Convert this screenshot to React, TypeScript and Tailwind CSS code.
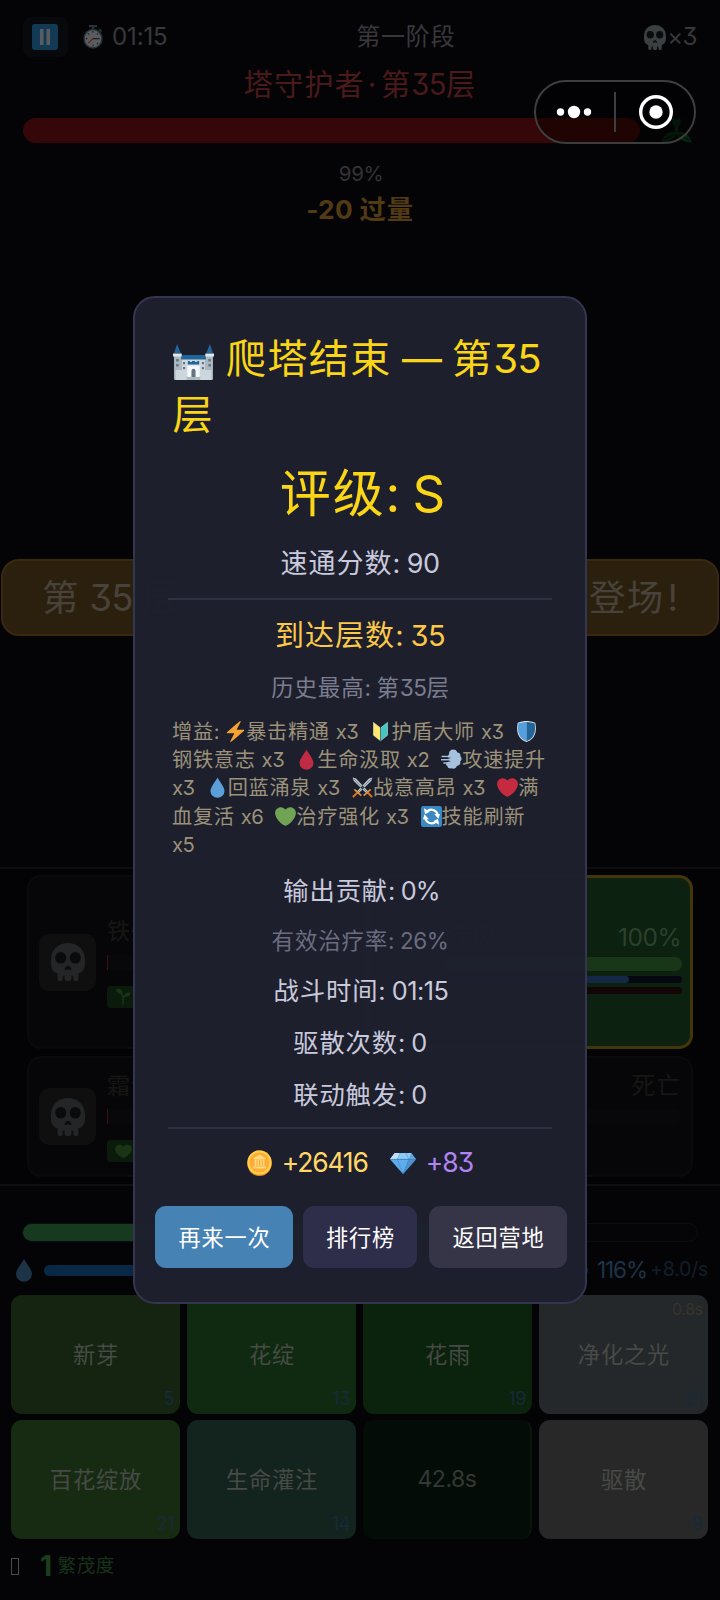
import React from "react";

const HAN = /([\u3400-\u9fff]+)/;

/** Mixed Han and Latin text: each script gets its own spacing. */
function T({ children, latin = "tracking-[-0.02em]" }: { children: string; latin?: string }) {
  return (
    <>
      {children.split(HAN).map((part, i) =>
        part === "" ? null : HAN.test(part) ? (
          <span key={i} className="tracking-[0.035em]">{part}</span>
        ) : (
          <span key={i} className={`whitespace-pre [font-feature-settings:'cv09'] ${latin}`}>{part}</span>
        ),
      )}
    </>
  );
}

type IconProps = { className?: string };

function Svg({ className = "", children, box = "0 0 36 36" }: { className?: string; children: React.ReactNode; box?: string }) {
  return (
    <svg viewBox={box} className={`inline-block shrink-0 ${className}`} preserveAspectRatio="none" aria-hidden>
      {children}
    </svg>
  );
}

const HEART =
  "M35.885 11.833c0-5.45-4.418-9.868-9.867-9.868-3.308 0-6.227 1.633-8.018 4.129-1.791-2.496-4.71-4.129-8.017-4.129-5.45 0-9.868 4.417-9.868 9.868 0 .772.098 1.52.266 2.241C1.751 22.587 11.216 31.568 18 34.034c6.783-2.466 16.249-11.447 17.617-19.959.17-.721.268-1.469.268-2.242z";
const ZAP =
  "M32.938 15.651C32.792 15.26 32.418 15 32 15H19.925L26.89 1.458c.219-.426.106-.947-.271-1.243C26.437.071 26.218 0 26 0c-.233 0-.466.082-.653.243L18 6.588 3.347 19.243c-.316.273-.43.714-.284 1.105S3.582 21 4 21h12.075L9.11 34.542c-.219.426-.106.947.271 1.243.182.144.401.215.619.215.233 0 .466-.082.653-.243L18 29.412l14.653-12.655c.317-.273.43-.714.285-1.106z";

const Heart = ({ className, fill }: IconProps & { fill: string }) => (
  <Svg className={className}><path fill={fill} d={HEART} /></Svg>
);
const Zap = ({ className }: IconProps) => (
  <Svg className={className}><path fill="#f4a332" d={ZAP} /></Svg>
);
const Drop = ({ className, fill }: IconProps & { fill: string }) => (
  <Svg className={className}>
    <path fill={fill} d="M18 1C15 7.500 6 17 6 24a12 11.500 0 0 0 24 0C30 17 21 7.500 18 1z" />
  </Svg>
);
const Beginner = ({ className }: IconProps) => (
  <Svg className={className}>
    <path fill="#ffe872" stroke="#f3efb0" d="M6 2.500 18 12v22L6 24.500z" />
    <path fill="#42c8be" stroke="#b9e6df" d="M30 2.500 18 12v22l12-9.500z" />
    <path stroke="#1e202e" strokeWidth="1" d="M18 11v24" />
  </Svg>
);
const Shield = ({ className }: IconProps) => (
  <Svg className={className}>
    <path fill="#e1e8ed" d="M33 3c-7-3-15-3-15-3S10 0 3 3C0 18 3 31 18 36c15-5 18-18 15-33z" />
    <path fill="#55a0dc" d="M18 34.500C6 30.500 1.500 19.500 4 4.200 9.500 1.700 18 1.500 18 1.500z" />
    <path fill="#226699" d="M18 34.500c12-4 16.500-15 14-30.300C26.500 1.700 18 1.500 18 1.500z" />
  </Svg>
);
const Dash = ({ className }: IconProps) => (
  <Svg className={className}>
    <path fill="#a6c1dc" d="M14 9c-1-4 2-8 7-8 4 0 6 2 7 5 4 0 6 3 5 6 3 3 3 7 0 9 1 5-2 8-6 8-1 4-5 6-9 4-4 1-7-1-7-4-3-1-3-4-1-6 3-1 5-3 4-6-3-1-3-6 0-8z" />
    <path fill="none" stroke="#a6c1dc" strokeWidth="2.600" strokeLinecap="round" d="M2 13h13M1 18.500h17M5 24h10" />
    <path fill="none" stroke="#1e202e" strokeWidth="1.200" d="M2 15.500h14M3 21.200h13" />
  </Svg>
);
const Swords = ({ className }: IconProps) => (
  <Svg className={className}>
    <path fill="#b8c3ca" d="m1 1 6 1.500L29 26l-3 3L3 7zM35 1l-6 1.500L7 26l3 3L33 7z" />
    <path stroke="#66757f" strokeWidth="1.300" d="m3 3 23 23M33 3 10 26" />
    <path stroke="#e2913a" strokeWidth="3" strokeLinecap="round" d="m21 31 10-9M5 22l10 9" />
    <path stroke="#d8731e" strokeWidth="3.500" strokeLinecap="round" d="m28 28 5.500 5.500M8 28l-5.500 5.500" />
  </Svg>
);
const Refresh = ({ className }: IconProps) => (
  <Svg className={className}>
    <rect width="36" height="36" rx="4" fill="#3b88c3" />
    <path fill="none" stroke="#fff" strokeWidth="3.600" d="M7.500 21A11 11 0 0 0 26 26.500M28.500 15A11 11 0 0 0 10 9.500" />
    <path fill="#fff" d="M3.500 22.500h10L6 14zM32.500 13.500h-10L30 22zM5 4l2 10 8-4zM31 32l-2-10-8 4z" />
  </Svg>
);
const Coin = ({ className }: IconProps) => (
  <Svg className={className}>
    <ellipse cx="18" cy="19" rx="17.500" ry="17" fill="#e08a1e" />
    <ellipse cx="18" cy="17.300" rx="17.500" ry="17" fill="#ffcf4f" />
    <ellipse cx="18" cy="17.300" rx="14.500" ry="14" fill="#ffac33" />
    <path fill="#ffd983" d="m18 6.500 8.500 4.500v2h-17v-2zM11 14h2.500v8H11zM15 14h2.200v8H15zM19 14h2.200v8H19zM22.800 14h2.400v8h-2.400zM9 23h18v2.500H9z" />
  </Svg>
);
const Diamond = ({ className }: IconProps) => (
  <Svg className={className} box="0 0 36 30">
    <path fill="#8ccaf7" d="M6.500 0h23L36 9H0z" />
    <path fill="#bddef4" d="M6.500 0 0 9h10l4-9z" />
    <path fill="#5dadec" d="M0 9h36L18 30z" />
    <path fill="#4a93cf" d="M26 9h10L18 30z" />
    <path fill="#4289c1" d="M29.500 0 36 9H26z" opacity=".55" />
    <path fill="none" stroke="#2d6fa6" strokeWidth=".7" strokeDasharray="1.800 .8" d="m10 9 8 21 8-21M10 9l4-9M26 9l-4-9M0 9h36" />
  </Svg>
);
const Castle = ({ className }: IconProps) => (
  <Svg className={className} box="0 0 40 36">
    <path fill="#226699" d="M4 0 1 9h6.500zM36 0l-3.500 9H39zM8 11h24v5H8z" />
    <path fill="#aab8c2" d="M1 12h7v24H2a1 1 0 0 1-1-1zM32 12h7v23a1 1 0 0 1-1 1h-6z" />
    <path fill="#e1e8ed" d="M0 9.500h8.500v3H0zM31.500 9.500H40v3h-8.500z" />
    <path fill="#ccd6dd" d="M8 15.500h24V36H8zM2.500 26h7v10h-7zM30.500 26h7v10h-7z" />
    <path fill="#aab8c2" d="M13.500 32h13v4h-13z" />
    <path fill="#f5f8fa" d="M14 21.500h12V33H14z" />
    <path fill="#226699" d="M14.500 17h2v1h2v-1h3v1h2v-1h2v3.500h-11z" />
    <path fill="#66757f" d="M18 33v-6a2 2.200 0 0 1 4 0v6zM3 15h2.500v2.500H3zM3 20h2.500v2.500H3zM34.500 15H37v2.500h-2.500zM34.500 20H37v2.500h-2.500zM9.800 18h2v2.300h-2zM9.800 23h2v2.300h-2zM28.200 18h2v2.300h-2zM28.200 23h2v2.300h-2z" />
  </Svg>
);
const Skull = ({ className, fill, hole }: IconProps & { fill: string; hole: string }) => (
  <Svg className={className}>
    <path fill={fill} d="M36 16C36 6 28 0 18 0S0 6 0 16c0 6 0 10.500 7 13v4.500a2.700 2.700 0 0 0 5.400 0V31h2v2.500a3.500 2.700 0 0 0 7.200 0V31h2v2.500a2.700 2.700 0 0 0 5.400 0V29c7-2.500 7-7 7-13z" />
    <ellipse cx="10.300" cy="14" rx="5.900" ry="5.500" fill={hole} />
    <ellipse cx="25.700" cy="14" rx="5.900" ry="5.500" fill={hole} />
    <path fill={hole} d="M18 21.800c2 0 3.400 1.800 3.400 3 0 .9-1 1.200-1.700.6-.9-.7-2.500-.7-3.400 0-.7.600-1.700.300-1.700-.6 0-1.200 1.400-3 3.400-3z" />
  </Svg>
);
const Pause = ({ className }: IconProps) => (
  <Svg className={className}>
    <rect width="36" height="36" rx="4" fill="#133a54" />
    <path fill="#5a5d60" d="M11 7h5v22h-5zM20 7h5v22h-5z" />
  </Svg>
);
const Stopwatch = ({ className }: IconProps) => (
  <Svg className={className} box="0 0 30 36">
    <path fill="#2b3135" d="M9 0h12v3.500H9zM13 3h4v4h-4zM25 5l4 3.500-2 2-4-3.500z" />
    <ellipse cx="15" cy="20.500" rx="14.500" ry="15" fill="#24303a" />
    <ellipse cx="15" cy="20.500" rx="12.300" ry="12.800" fill="#5a5c5e" />
    <path stroke="#1a2024" strokeWidth="1.800" d="M15 20.500h10M15 9v2.500M15 29.500V32M4 20.500h2.500M7.500 12.500l1.500 1.700M22.500 12.500 21 14.200M22.500 28.500 21 27" />
    <path stroke="#6b1c1f" strokeWidth="1.800" d="m15 20.500-7 6.500" />
  </Svg>
);
const Seedling = ({ className }: IconProps) => (
  <Svg className={className}>
    <path fill="none" stroke="#1b3416" strokeWidth="3.400" strokeLinecap="round" d="M18 34V20C17 14 12 9 7 7M18 23c1-5 5-8 11-10" />
    <path fill="#1b3416" d="M1 4c8-5 15-1 16 8-6 1-12-1-16-8zM20 17c2-7 9-9 15-7-1 7-8 11-15 7z" />
  </Svg>
);
const Clover = ({ className }: IconProps) => (
  <Svg className={className}>
    <path fill="#062510" d="M14 0l4 3 4-3 1 8-3 5v7h3c5 0 9 3 13 15-9 0-15-4-17-11h-2C15 31 9 35 0 35c4-12 8-15 13-15h3v-7l-3-5z" />
    <path stroke="#041309" strokeWidth="1.500" fill="none" d="m3 32 12-8M33 32l-12-8" />
  </Svg>
);

const BUFF = "mx-[0px] h-[21px] w-[21px] align-[-3px]";

const divider = "mx-[33px] h-[2px] shrink-0 bg-[#2f3042]";
const row = "flex shrink-0 items-center justify-center whitespace-pre pt-[2px]";

function ResultDialog() {
  return (
    <section className="absolute left-[133px] top-[296px] flex h-[1008px] w-[454px] flex-col rounded-[22px] border-2 border-[#35354f] bg-[#1e202e]/98">
      <h1 className="mt-[33px] h-[111px] shrink-0 pl-[37.500px] text-[40px] leading-[56px] whitespace-nowrap text-[#fbd616]">
        <Castle className="mr-[12.500px] h-[36px] w-[41px] align-[-7px]" />
        <T>爬塔结束 — 第35</T>
        <br />
        <T>层</T>
      </h1>
      <div className={`${row} h-[101px] pl-[4px] pt-[4px] text-[51px] text-[#fbd616]`}><T>评级: S</T></div>
      <div className={`${row} h-[41px] text-[27px] text-[#c8c9dc]`}><T>速通分数: 90</T></div>
      <div className={`${divider} mt-[14px]`} />
      <div className={`${row} h-[69px] text-[29px] text-[#fbc84a]`}><T>到达层数: 35</T></div>
      <div className={`${row} h-[35px] pl-[1px] text-[22.500px] text-[#7b7c8e]`}><T>历史最高: 第35层</T></div>
      <div className="mt-[14px] h-[140px] shrink-0 pl-[37px] text-[20.200px] leading-[28.200px] [word-spacing:0.7px] whitespace-pre text-[#9b9279]">
        <div><T>增益: </T><Zap className={BUFF} /><T>暴击精通 x3  </T><Beginner className={BUFF} /><T>护盾大师 x3  </T><Shield className={BUFF} /></div>
        <div><T>钢铁意志 x3  </T><Drop fill="#be2b43" className={BUFF} /><T>生命汲取 x2  </T><Dash className={BUFF} /><T>攻速提升</T></div>
        <div><T>x3  </T><Drop fill="#5a9fd8" className={BUFF} /><T>回蓝涌泉 x3  </T><Swords className={BUFF} /><T>战意高昂 x3  </T><Heart fill="#c42a40" className={BUFF} /><T>满</T></div>
        <div><T>血复活 x6  </T><Heart fill="#70a353" className={BUFF} /><T>治疗强化 x3  </T><Refresh className={BUFF} /><T>技能刷新</T></div>
        <div><T>x5</T></div>
      </div>
      <div className={`${row} h-[64px] pl-[3px] text-[25.300px] text-[#c8c9dc]`}><T latin="tracking-[-0.035em]">输出贡献: 0%</T></div>
      <div className={`${row} h-[35px] text-[22.500px] text-[#6b6c7f]`}><T>有效治疗率: 26%</T></div>
      <div className={`${row} h-[65px] pl-[2px] text-[25.300px] text-[#c8c9dc]`}><T>战斗时间: 01:15</T></div>
      <div className={`${row} h-[39px] text-[25.300px] text-[#c8c9dc]`}><T>驱散次数: 0</T></div>
      <div className={`${row} h-[66px] text-[25.300px] text-[#c8c9dc]`}><T>联动触发: 0</T></div>
      <div className={divider} />
      <div className={`${row} h-[66px] text-[26.500px]`}>
        <Coin className="mr-[10px] h-[26px] w-[25px]" />
        <span className="text-[#ffd768]"><T latin="tracking-[-0.045em]">+26416</T></span>
        <Diamond className="mr-[10px] ml-[22px] h-[21px] w-[26px]" />
        <span className="text-[#b184f2]"><T latin="tracking-[-0.035em]">+83</T></span>
      </div>
      <div className="mt-[11px] flex h-[62px] pl-[20px] text-[22.200px] text-white *:pt-[1px] *:pl-[1px]">
        <button className="w-[138px] rounded-[11px] bg-[#4682b4]"><T>再来一次</T></button>
        <button className="ml-[10px] w-[114px] rounded-[11px] bg-[#2e2d4a]"><T>排行榜</T></button>
        <button className="ml-[12px] w-[138px] rounded-[11px] bg-[#363548]"><T>返回营地</T></button>
      </div>
    </section>
  );
}

function Capsule() {
  return (
    <div className="absolute left-[534px] top-[80px] flex h-[64px] w-[162px] items-center rounded-full border-2 border-[#3e3e3e] bg-black/40">
      <svg viewBox="0 0 78 60" className="h-[60px] w-[78px]" fill="#fff">
        <circle cx="24.500" cy="30" r="3.700" /><circle cx="38" cy="30" r="6.200" /><circle cx="51.500" cy="30" r="3.700" />
      </svg>
      <div className="h-[40px] w-[2px] bg-[#3e3e3e]" />
      <svg viewBox="0 0 78 60" className="h-[60px] w-[78px]">
        <circle cx="40" cy="30" r="15.300" fill="none" stroke="#fff" strokeWidth="3.400" />
        <circle cx="40" cy="30" r="6.700" fill="#fff" />
      </svg>
    </div>
  );
}

function DeadCard({ name, badge, tag }: { name: string; badge: React.ReactNode; tag?: string }) {
  return (
    <div className="flex w-[327px] rounded-[14px] border-2 border-[#0a0a0c] bg-[#060608] px-[10px]">
      <div className="flex h-full items-center">
        <div className="flex h-[57px] w-[57px] items-center justify-center rounded-[10px] bg-[#0f0f0f]">
          <Skull className="h-[38px] w-[34px]" fill="#242526" hole="#0b0b0b" />
        </div>
      </div>
      <div className="ml-[11px] flex flex-1 flex-col justify-center">
        <div className="flex h-[30px] items-center justify-between text-[23px] text-[#161613]"><T>{name}</T>{tag && <span className="text-[24px]"><T>{tag}</T></span>}</div>
        <div className={`mt-[8px] h-[15px] rounded-r-md bg-[#08080a] ${tag ? "" : "border-l border-[#400f0e]"}`} />
        {badge}
      </div>
    </div>
  );
}

type Skill = { name: string; bg: string; cost?: string; cast?: string };
const SKILLS: Skill[] = [
  { name: "新芽", bg: "bg-[#142410]", cost: "5" },
  { name: "花绽", bg: "bg-[#0f2a10]", cost: "13" },
  { name: "花雨", bg: "bg-[#0b220d]", cost: "19" },
  { name: "净化之光", bg: "bg-[#25282a]", cost: "21", cast: "0.8s" },
  { name: "百花绽放", bg: "bg-[#172b13]", cost: "21" },
  { name: "生命灌注", bg: "bg-[#13231d]", cost: "14" },
  { name: "42.8s", bg: "bg-[#040c08] border-r-2 border-[#09170f]" },
  { name: "驱散", bg: "bg-[#282828]", cost: "9" },
];

const badgeBox = "mt-[16px] flex h-[22px] w-[60px] items-center rounded-[4px] bg-[#0a1b0c] pl-[8px]";

export default function App() {
  return (
    <div className="relative flex h-[1600px] w-[720px] flex-col overflow-hidden bg-[#040407] font-[Inter,'Noto_Sans_CJK_SC',sans-serif]">
      <header className="mt-[17px] flex h-[40px] shrink-0 items-center justify-between px-[23px] text-[24px] text-[#38383c]">
        <div className="flex items-center">
          <div className="flex h-[40px] w-[45px] items-center justify-center rounded-[8px] bg-[#08090d] pr-[1px]"><Pause className="h-[26px] w-[26px]" /></div>
          <Stopwatch className="mr-[9px] ml-[15px] h-[24px] w-[20px]" />
          <T latin="tracking-[-0.005em]">01:15</T>
        </div>
        <div><T>第一阶段</T></div>
        <div className="flex items-center">
          <Skull className="mr-[1px] h-[25px] w-[22px]" fill="#3b3f42" hole="#0a0c0e" />
          <T>×3</T>
        </div>
      </header>
      <div className={`${row} h-[52px] pt-[4px] text-[29.200px] text-[#4a1a1b]`}>
        <T>塔守护者</T><span className="mr-[5px] ml-[3px]">·</span><T>第35层</T>
      </div>
      <div className="mx-[23px] mt-[9px] flex h-[25px] shrink-0 rounded-full bg-[#050508]">
        <div className="h-full w-[617px] rounded-full bg-[#360708]" />
        <Clover className="ml-[21px] h-[25px] w-[31px]" />
      </div>
      <div className={`${row} mt-[15px] h-[30px] pl-[2px] text-[20.500px] text-[#333336]`}><T>99%</T></div>
      <div className={`${row} h-[40px] pt-[3px] text-[26.300px] font-bold text-[#523a15]`}><T latin="tracking-[0.01em]">-20 过量</T></div>

      <div className="mx-[1px] mt-[331px] flex h-[77px] shrink-0 items-center justify-between rounded-[18px] border-2 border-[#38290f] bg-[#2b1f0d] pt-[2px] pr-[39px] pl-[39px] text-[36.500px] text-[#47423a]">
        <div><T>第 35 层</T></div>
        <div><T>登场</T><span className="ml-[3px]">!</span></div>
      </div>

      <main className="mt-[231px] grid h-[319px] shrink-0 grid-cols-[327px_327px] grid-rows-[174px_121px] content-start gap-x-[12px] gap-y-[7px] border-y-2 border-[#0e0e10] bg-[#030305] px-[27px] pt-[6px]">
        <DeadCard name="铁壁" badge={<div className={badgeBox}><Seedling className="h-[17px] w-[16px]" /></div>} />
        <div className="flex flex-col rounded-[14px] border-[3px] border-[#43360b] bg-[#0c210f] pr-[8px] pl-[77px]">
          <div className="mt-[44px] flex h-[30px] items-center justify-between pr-[1px] text-[24.500px] text-[#2c402e]"><T>疾风</T><span><T>100%</T></span></div>
          <div className="mt-[5px] h-[14px] rounded-full bg-[#193619]" />
          <div className="mt-[5px] h-[7px] rounded-full bg-[#060810]"><div className="h-full w-[183px] rounded-full bg-[#152947]" /></div>
          <div className="mt-[4px] h-[7px] rounded-full bg-[#110605]" />
        </div>
        <DeadCard name="霜语" badge={<div className={badgeBox}><Heart fill="#1b3416" className="h-[15px] w-[17px]" /></div>} />
        <DeadCard name="暗影" tag="死亡" badge={<div className="mt-[16px] h-[22px]" />} />
      </main>

      <div className="mx-[22px] mt-[37px] h-[19px] shrink-0 rounded-full border border-[#0c0c12] bg-[#050508]"><div className="h-full w-[420px] rounded-full bg-[#163a20]" /></div>
      <div className="mt-[14px] flex h-[28px] shrink-0 items-center pl-[12px]">
        <Drop fill="#1c3445" className="h-[24px] w-[24px]" />
        <div className="ml-[8px] h-[11px] w-[544px] rounded-full bg-[#092845]" />
        <div className="ml-[9px] w-[53px] text-[22.500px] text-[#1d3447]"><T latin="tracking-[-0.05em]">116%</T></div>
        <div className="text-[19.500px] text-[#121e2a]"><T latin="tracking-[-0.01em]">+8.0/s</T></div>
      </div>

      <div className="mt-[11px] grid shrink-0 grid-cols-4 grid-rows-[119px_119px] gap-x-[7px] gap-y-[6px] pr-[12px] pl-[11px]">
        {SKILLS.map((s) => (
          <div key={s.name} className={`relative flex items-center justify-center rounded-[11px] pl-[1px] ${s.bg} ${s.cost ? "text-[22.300px] text-[#474a46]" : "text-[23px] text-[#343834]"}`}>
            <T>{s.name}</T>
            {s.cast && <span className="absolute top-[4px] right-[5px] text-[16px] leading-[20px] text-[#37332c]"><T>{s.cast}</T></span>}
            {s.cost && <span className="absolute right-[6px] bottom-[5px] text-[18px] leading-[20px] text-[#172a38]"><T>{s.cost}</T></span>}
          </div>
        ))}
      </div>

      <footer className="mt-[12px] flex h-[30px] shrink-0 items-center pl-[11px] text-[18.500px] text-[#17341a]">
        <span className="h-[17px] w-[8px] border border-[#4a4a4c]" />
        <span className="mr-[6px] ml-[21px] text-[28px] font-bold text-[#1c3f1b]"><T>1</T></span>
        <T>繁茂度</T>
      </footer>

      <ResultDialog />
      <Capsule />
    </div>
  );
}
